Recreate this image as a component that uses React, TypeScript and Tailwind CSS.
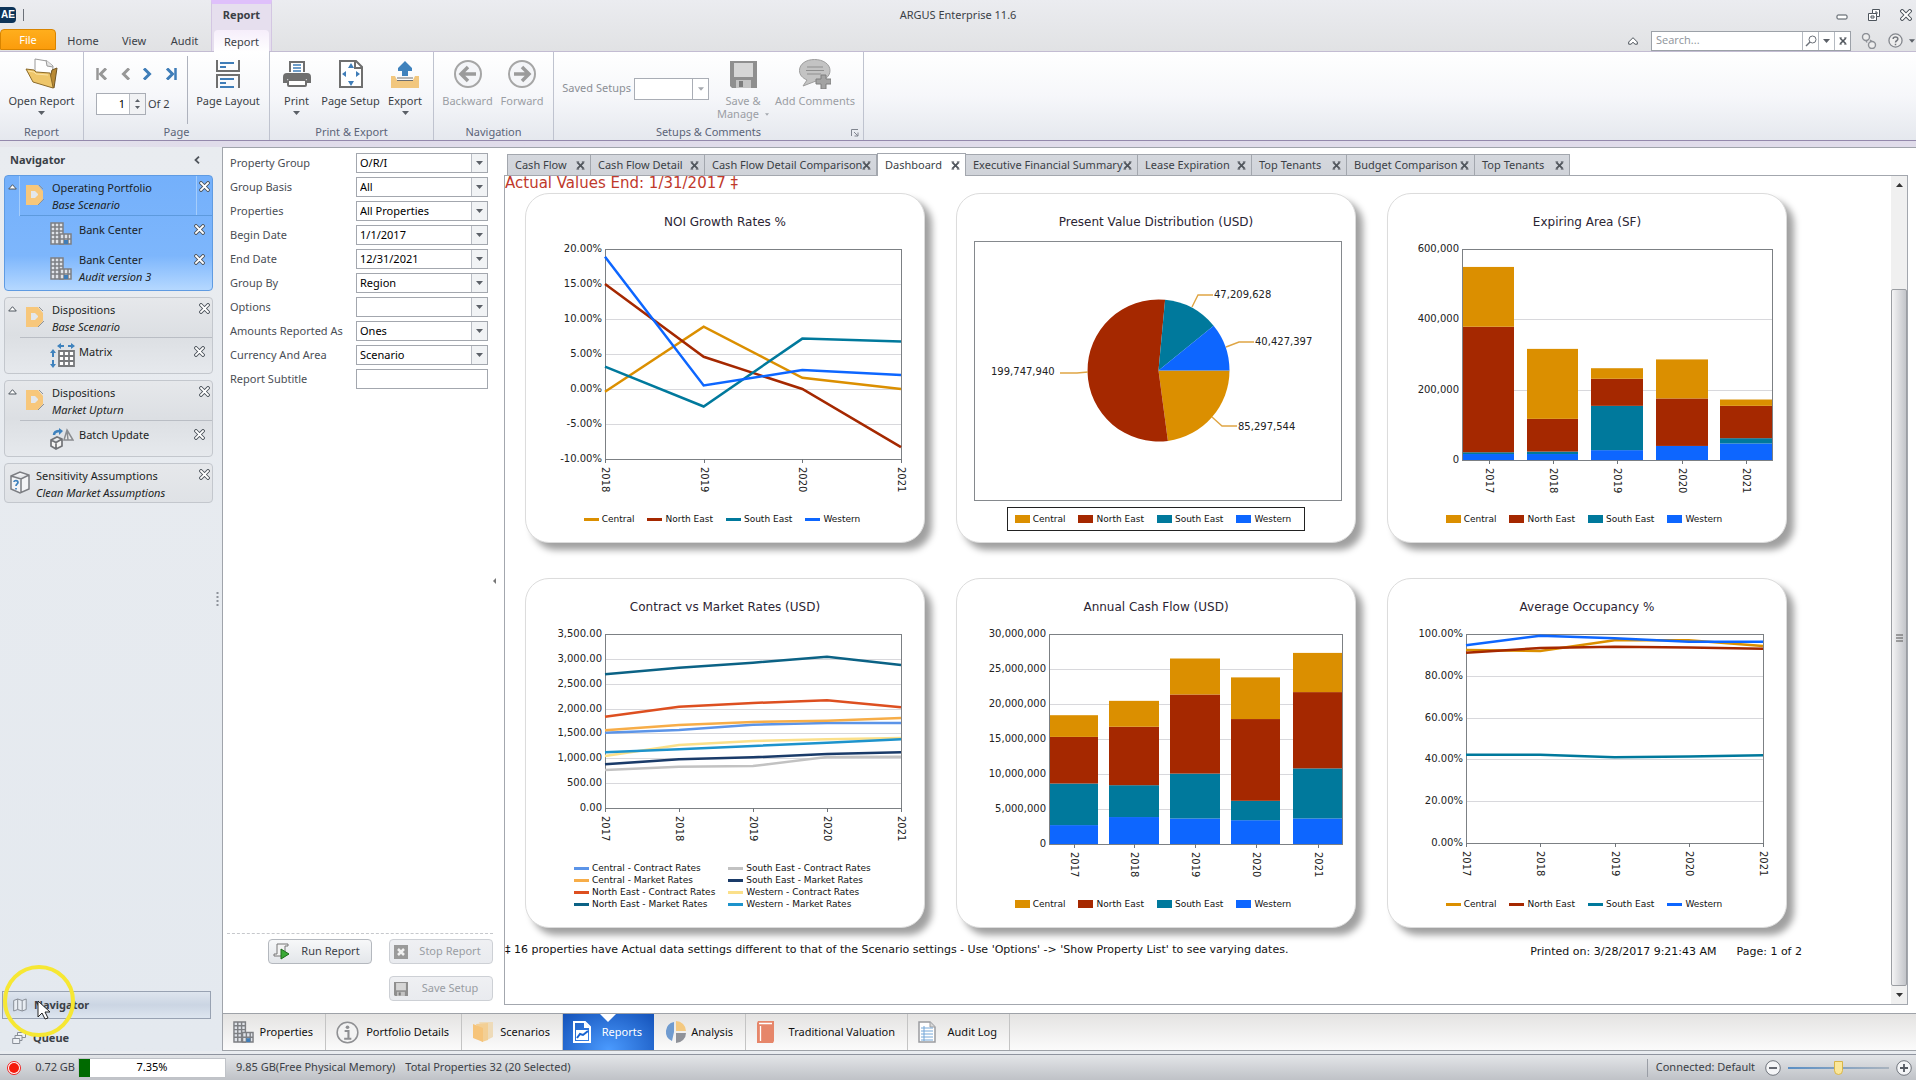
import React from "react";

const ORANGE = "#db8f00";
const RED = "#a52800";
const TEAL = "#00799c";
const BLUE = "#0d66ff";

/* ---------- small icons ---------- */

type IconProps = { className?: string };

const OutlineX = ({ className = "size-3" }: IconProps) => (
  <svg viewBox="0 0 12 12" className={className} aria-hidden>
    <path d="M2.2 2.2l7.6 7.6M9.8 2.2L2.2 9.8" stroke="#4d545c" strokeWidth="4" strokeLinecap="square" />
    <path d="M2.2 2.2l7.6 7.6M9.8 2.2L2.2 9.8" stroke="#fff" strokeWidth="2" strokeLinecap="square" />
  </svg>
);

const BoldX = ({ className = "size-[10px]" }: IconProps) => (
  <svg viewBox="0 0 10 10" className={className} aria-hidden>
    <path d="M1.5 1.5l7 7M8.5 1.5l-7 7" stroke="#50555c" strokeWidth="2" />
    <path d="M0.5 1h3M6.5 1h3M0.5 9h3M6.5 9h3" stroke="#50555c" strokeWidth="1" />
  </svg>
);

const DownArrow = ({ className = "w-[7px] h-1", color = "#5b6067" }: IconProps & { color?: string }) => (
  <svg viewBox="0 0 7 4" className={className} aria-hidden>
    <path d="M0 0h7L3.5 4z" fill={color} />
  </svg>
);

const FolderOpen = () => (
  <svg viewBox="0 0 34 32" className="w-[34px] h-8" aria-hidden>
    <path d="M10 1l12 2 6 5-1 13-17-2z" fill="#fff" stroke="#9a9a9a" />
    <path d="M21 2l1 6 6 1" fill="#e6e6e6" stroke="#9a9a9a" />
    <path d="M27 12l5-2-3 20-6-3z" fill="#b98a35" stroke="#6f5424" />
    <path d="M1 11l8 1 2 2 14 1 3 14v1L8 24z" fill="#eec66a" stroke="#8b6a2a" />
    <path d="M3 13l6 1 2 2 12 1" stroke="#fbe3a4" fill="none" />
  </svg>
);

const PageLayoutIcon = () => (
  <svg viewBox="0 0 24 28" className="w-6 h-7" aria-hidden>
    <path d="M1 0v11h22V0M1 28V15h22v13" fill="none" stroke="#6f6f6f" strokeWidth="2" />
    <path d="M4 3h14M4 7h6M4 19h14M4 23h6M4 27h14" stroke="#3f7db8" strokeWidth="2" />
  </svg>
);

const PrinterIcon = () => (
  <svg viewBox="0 0 28 26" className="w-7 h-[26px]" aria-hidden>
    <path d="M7 11V1h14v10" fill="#fff" stroke="#6f6f6f" strokeWidth="2" />
    <path d="M10 4h8M10 7h8M10 10h8" stroke="#3f7db8" strokeWidth="1.5" />
    <path d="M4 12h20a4 4 0 014 4v6h-4v-4H4v4H0v-6a4 4 0 014-4z" fill="#6f6f6f" />
    <rect x="5" y="19" width="18" height="6" rx="1" fill="#fff" stroke="#6f6f6f" strokeWidth="2" />
  </svg>
);

const PageSetupIcon = () => (
  <svg viewBox="0 0 24 28" className="w-6 h-7" aria-hidden>
    <path d="M1 1h16l6 6v20H1z" fill="#fff" stroke="#6f6f6f" strokeWidth="2" />
    <path d="M16 1v7h7" fill="none" stroke="#6f6f6f" strokeWidth="2" />
    <path d="M12 3l3 5H9zM12 26l3-5H9zM3 14l4-3v6zM21 14l-4-3v6z" fill="#3f7db8" />
  </svg>
);

const ExportIcon = () => (
  <svg viewBox="0 0 28 28" className="size-7" aria-hidden>
    <path d="M0 16h4l2 4h16l2-4h4v12H0z" fill="#f2c77e" />
    <path d="M14 1l7 7v3h-4v5h-6v-5H7V8z" fill="#3f82bd" />
    <path d="M6 18h16M6 20.5h16" stroke="#6f6f6f" />
  </svg>
);

const CircleArrow = ({ left }: { left?: boolean }) => (
  <svg viewBox="0 0 28 28" className="size-7" aria-hidden>
    <circle cx="14" cy="14" r="13" fill="#f4f5f8" stroke="#a6a6a6" strokeWidth="2" />
    <path
      d={left ? "M22 14H8M14 7l-7 7 7 7" : "M6 14h14M14 7l7 7-7 7"}
      fill="none"
      stroke="#9b9b9b"
      strokeWidth="3.5"
    />
  </svg>
);

const Floppy = ({ className = "size-[27px]" }: IconProps) => (
  <svg viewBox="0 0 27 27" className={className} aria-hidden>
    <path d="M0 0h27v27H2l-2-2z" fill="#8f8f8f" />
    <rect x="4" y="2" width="19" height="14" fill="#d6d6d6" />
    <rect x="6" y="19" width="15" height="8" fill="#c4c4c4" />
    <rect x="9" y="20" width="4" height="6" fill="#7d7d7d" />
  </svg>
);

const CommentAdd = () => (
  <svg viewBox="0 0 32 30" className="w-8 h-[30px]" aria-hidden>
    <path d="M15.500 0.500C24 0.500 31 5 31 11.500S25 22 17 22L4 27l4-6C3.500 19 .5 16 .5 11.500.5 5 7 .5 15.500.5z" fill="#c3c3c3" stroke="#9d9d9d" />
    <path d="M8 8h16M7 11.500h18M8 15h14" stroke="#8f8f8f" strokeWidth="1.200" />
    <path d="M22 16h5v4h5v5h-5v5h-5v-5h-5v-5h5z" fill="#a3a3a3" stroke="#7f7f7f" />
  </svg>
);

const NavArrow = ({ dir, end, on }: { dir: "l" | "r"; end?: boolean; on?: boolean }) => (
  <svg viewBox="0 0 12 12" className={dir === "l" ? "size-3 rotate-180" : "size-3"} aria-hidden>
    <path d="M2 0.500L7.500 6 2 11.500" fill="none" stroke={on ? "#3f7db8" : "#979797"} strokeWidth="3" />
    {end && <path d="M10.500 0v12" stroke={on ? "#3f7db8" : "#979797"} strokeWidth="2.500" />}
  </svg>
);

const ScenarioIcon = () => (
  <svg viewBox="0 0 20 22" className="w-5 h-[22px] shrink-0" aria-hidden>
    <path d="M1 1h12l5 6v8l-5 6H1z" fill="#f7c77b" />
    <path d="M6 7h4l3 3v1l-3 3H6z" fill="#e3e7ec" />
    <path d="M14 1l4 4M19 15l-6 6" fill="none" stroke="#8d9299" />
  </svg>
);

const BuildingIcon = ({ className = "w-[22px] h-[23px]" }: IconProps) => (
  <svg viewBox="0 0 22 23" className={className + " shrink-0"} aria-hidden>
    <path d="M1 1h12v21H1zM5 1v21M9 1v21M1 5h12M1 9h12M1 13h12M1 17h12" fill="#dfe3e8" stroke="#7d7f83" strokeWidth="1.500" />
    <path d="M10 12h11v10H10zM14 12v10M18 12v10M10 17h11" fill="#dfe3e8" stroke="#7d7f83" strokeWidth="1.500" />
    <rect x="14" y="18" width="4" height="4" fill="#3f7db8" />
  </svg>
);

const MatrixIcon = () => (
  <svg viewBox="0 0 26 25" className="w-[26px] h-[25px] shrink-0" aria-hidden>
    <path d="M9 8h15v15H9zM14 8v15M19 8v15M9 13h15M9 18h15" fill="#fff" stroke="#77797c" strokeWidth="1.800" />
    <path d="M7 3l4-3v6zM25 3l-4-3v6z" fill="#3f82bd" />
    <path d="M10 3h4M18 3h4" stroke="#3f82bd" strokeWidth="2" />
    <path d="M3 6l3 4H0zM3 25l3-4H0z" fill="#3f82bd" />
    <path d="M3 9v5M3 17v5" stroke="#3f82bd" strokeWidth="2" />
  </svg>
);

const BatchIcon = () => (
  <svg viewBox="0 0 24 22" className="w-6 h-[22px] shrink-0" aria-hidden>
    <path d="M1 12l6-3 5 2v7l-6 3-5-3zM1 12l5 2.500 6-3.500M6 14.500V21" fill="#f4f4f4" stroke="#717377" strokeWidth="1.700" />
    <path d="M4 7c0-3 3-4 6-4" fill="none" stroke="#3f82bd" strokeWidth="2.500" />
    <path d="M9 0l4 3-4 4z" fill="#3f82bd" />
    <path d="M17 2l6 10-9 0zM17 2l1 10" fill="#e9e9e9" stroke="#8a8c90" strokeWidth="1.500" />
  </svg>
);

const CubeQuestion = () => (
  <svg viewBox="0 0 20 23" className="w-5 h-[23px] shrink-0" aria-hidden>
    <path d="M1 5l9-4 9 3v14l-9 4-9-4zM1 5l10 3 8-4M11 8v14" fill="#f3f4f6" stroke="#7b7d82" strokeWidth="1.500" />
    <path d="M4 11c0-2 4-2 4 .5 0 1.500-2 1.500-2 3.500M6 17v1.500" fill="none" stroke="#3f82bd" strokeWidth="1.700" />
  </svg>
);

const InfoIcon = () => (
  <svg viewBox="0 0 24 24" className="size-[23px]" aria-hidden>
    <circle cx="12" cy="12" r="10.800" fill="#f3f3f3" stroke="#8f9093" strokeWidth="1.600" />
    <circle cx="12" cy="6.500" r="1.900" fill="#8f9093" />
    <path d="M9 10.500h4v8M8.500 18.500h7.500" fill="none" stroke="#8f9093" strokeWidth="2.200" />
  </svg>
);

const ScenariosIcon = () => (
  <svg viewBox="0 0 22 22" className="size-[22px]" aria-hidden>
    <path d="M7 1h14v15l-6 3z" fill="#eedbb9" />
    <path d="M4 3l12-1v17l-6 2z" fill="#f3cf94" />
    <path d="M1 3l10 4v14L1 17z" fill="#f6c47a" />
  </svg>
);

const ReportsIcon = () => (
  <svg viewBox="0 0 18 22" className="w-[18px] h-[22px]" aria-hidden>
    <path d="M1 1h11l5 5v15H1z" fill="none" stroke="#fff" strokeWidth="2" />
    <path d="M11 1v6h6z" fill="#fff" />
    <path d="M3 9h12v10H3z" fill="#fff" />
    <path d="M4 17l3-4 3 1 5-4" fill="none" stroke="#1762d0" strokeWidth="2" />
  </svg>
);

const AnalysisIcon = () => (
  <svg viewBox="0 0 22 22" className="size-[22px]" aria-hidden>
    <path d="M10 11V1A10 10 0 008 20z" fill="#6f9bd0" />
    <path d="M12 10V0a10 10 0 0110 10z" fill="#f4c980" />
    <path d="M12 12h10a10 10 0 01-10 10z" fill="#8f9299" />
  </svg>
);

const BookIcon = () => (
  <svg viewBox="0 0 18 22" className="w-[18px] h-[22px]" aria-hidden>
    <path d="M1 2l1-2h16v20l-1 2H1z" fill="#e6866a" />
    <path d="M3 2.500h13M4.500 5v15" stroke="#fff" strokeWidth="1.300" />
  </svg>
);

const LogIcon = () => (
  <svg viewBox="0 0 18 22" className="w-[18px] h-[22px]" aria-hidden>
    <path d="M1 1h11l5 5v15H1z" fill="#fff" stroke="#9a9ca0" strokeWidth="1.500" />
    <path d="M12 1v5h5" fill="#d8d8d8" stroke="#9a9ca0" />
    <path d="M3 7h12M3 10h12M3 13h12M3 16h12M3 19h12M6 5v15" stroke="#74a7d8" />
  </svg>
);

/* ---------- ribbon ---------- */

const RibbonButton = ({
  icon,
  label,
  arrow,
  disabled,
  width,
}: {
  icon: React.ReactNode;
  label: React.ReactNode;
  arrow?: boolean;
  disabled?: boolean;
  width: string;
}) => (
  <button
    disabled={disabled}
    className={
      "flex flex-col items-center text-center " + width + (disabled ? " text-[#9b9ea4]" : " text-[#3b3f46]")
    }
  >
    <span className="flex h-9 items-center">{icon}</span>
    <span className="whitespace-pre pt-0.5 leading-[13px]">{label}</span>
    {arrow && <DownArrow className="mt-1 h-1 w-[7px]" />}
  </button>
);

const RibbonGroup = ({
  title,
  width,
  children,
  launcher,
}: {
  title: string;
  width: string;
  children: React.ReactNode;
  launcher?: boolean;
}) => (
  <section className={"flex flex-col border-r border-[#bfc3cf] " + width}>
    <div className="flex flex-1 pt-1">{children}</div>
    <div className="relative text-center leading-4 text-[#5b6478]">
      {title}
      {launcher && (
        <button aria-label="Open dialog" className="absolute right-1 bottom-[3px]">
          <svg viewBox="0 0 8 8" className="size-2">
            <path d="M.5 7V.5H7M3 3l4 4M7 3.500V7H3.500" fill="none" stroke="#80858f" />
          </svg>
        </button>
      )}
    </div>
  </section>
);

const Header = () => (
  <header className="flex h-[52px] shrink-0 justify-between border-b border-[#c3bcd2] bg-linear-to-b from-[#ebecf0] to-[#e1e2e4]">
    <div className="flex flex-1">
      <div className="flex flex-col">
        <div className="flex h-[30px] items-center">
          <span className="flex h-4 w-4 items-center justify-center rounded-r bg-[#0c3358] font-['Liberation_Sans'] text-[10px] font-bold text-white">
            AE
          </span>
          <span className="ml-[7px] h-3 w-px bg-[#6b7078]" />
        </div>
        <nav className="flex h-[22px] text-[#3b3f46]">
          <button className="h-[21px] w-14 rounded-t-sm border border-[#d88400] bg-linear-to-b from-[#ffae1c] to-[#fb9c0b] text-white">
            File
          </button>
          <button className="w-[54px] pt-0.5">Home</button>
          <button className="w-12 pt-0.5">View</button>
          <button className="w-[53px] pt-0.5">Audit</button>
        </nav>
      </div>
      <div className="flex w-[61px] flex-col items-center border-x border-t-4 border-[#d3c6e2] border-t-[#dfc0fb] bg-[#e6dfee]">
        <span className="flex h-[26px] items-center pb-1 font-bold text-[#3b3f46]">Report</span>
        <button className="-mb-px h-[22px] w-[55px] rounded-t-sm bg-linear-to-b from-[#f6eefb] to-white pt-0.5 text-[#3b3f46]">
          Report
        </button>
      </div>
    </div>
    <h1 className="pt-[7px] text-[#3b3f46]">ARGUS Enterprise 11.6</h1>
    <div className="flex flex-1 flex-col items-end">
      <div className="flex h-[30px] items-center gap-5 pr-1">
        <button aria-label="Minimize">
          <svg viewBox="0 0 12 12" className="size-3">
            <rect x="1" y="6" width="10" height="4" rx="1" fill="#fff" stroke="#4d545c" />
          </svg>
        </button>
        <button aria-label="Restore">
          <svg viewBox="0 0 12 12" className="size-3">
            <path d="M4.500.5h7v7h-3v4h-8v-7h4z" fill="#fff" stroke="#4d545c" />
            <path d="M4.500 4.500h4v3M3 7h3v2H3zM7 3h2v2" fill="none" stroke="#4d545c" />
          </svg>
        </button>
        <button aria-label="Close">
          <OutlineX />
        </button>
      </div>
      <div className="flex h-[21px] items-center">
        <button aria-label="Collapse ribbon" className="mr-[13px]">
          <svg viewBox="0 0 10 8" className="h-2 w-[10px]">
            <path d="M5 .7L9.300 5v2.200H7L5 5.300 3 7.200H.7V5z" fill="#fff" stroke="#4d545c" />
          </svg>
        </button>
        <div className="flex h-5 w-[200px] border border-[#9ca1a8] bg-white">
          <input
            aria-label="Search"
            placeholder="Search..."
            className="min-w-0 flex-1 px-1 font-['Open_Sans'] outline-none placeholder:text-[#8e939a]"
          />
          <button aria-label="Find" className="flex w-4 items-center justify-center border-l border-[#b5bac1]">
            <svg viewBox="0 0 12 12" className="size-3">
              <circle cx="7.500" cy="4.500" r="3.500" fill="none" stroke="#6b7078" />
              <path d="M5 7l-4 4" stroke="#6b7078" strokeWidth="1.500" />
            </svg>
          </button>
          <button aria-label="Search options" className="flex w-4 items-center justify-center border-l border-[#b5bac1]">
            <DownArrow />
          </button>
          <button aria-label="Clear search" className="flex w-4 items-center justify-center border-l border-[#b5bac1]">
            <BoldX className="size-2" />
          </button>
        </div>
        <button aria-label="Links" className="ml-[10px]">
          <svg viewBox="0 0 16 16" className="size-4">
            <circle cx="5" cy="4" r="3.500" fill="#eee" stroke="#8d9096" strokeWidth="1.400" />
            <circle cx="11" cy="12" r="3.500" fill="#eee" stroke="#8d9096" strokeWidth="1.400" />
            <path d="M5 7.500l1 2M9 7l2 1.500" stroke="#8d9096" strokeWidth="1.400" />
          </svg>
        </button>
        <button aria-label="Help" className="ml-[11px] flex items-center gap-[6px] pr-px">
          <svg viewBox="0 0 16 16" className="size-[15px]">
            <circle cx="8" cy="8" r="7" fill="#eee" stroke="#85888e" strokeWidth="1.400" />
            <path d="M5.500 6.500c0-3 5-3 5 0 0 2-2.500 1.500-2.500 3.500M8 11.500V13" fill="none" stroke="#75787e" strokeWidth="1.600" />
          </svg>
          <DownArrow className="h-1 w-[6px]" />
        </button>
      </div>
    </div>
  </header>
);

const Ribbon = () => (
  <div className="flex h-[89px] shrink-0 border-b border-[#9489ac] bg-linear-to-b from-white via-[#f6f7fa] to-[#e5e8ee]">
    <RibbonGroup title="Report" width="w-[84px]">
      <RibbonButton width="w-full" icon={<FolderOpen />} label="Open Report" arrow />
    </RibbonGroup>
    <RibbonGroup title="Page" width="w-[186px]">
      <div className="flex w-[104px] flex-col border-r border-[#aeb2bd] pl-3">
        <div className="flex h-9 items-center gap-[11px]">
          <button aria-label="First page"><NavArrow dir="l" end /></button>
          <button aria-label="Previous page"><NavArrow dir="l" /></button>
          <button aria-label="Next page"><NavArrow dir="r" on /></button>
          <button aria-label="Last page"><NavArrow dir="r" end on /></button>
        </div>
        <label className="flex items-center gap-0.5 pt-px text-[#3b3f46]">
          <span className="flex h-[22px] w-[50px] border border-[#a9adb5] bg-white">
            <input aria-label="Page number" defaultValue="1" className="w-8 pr-1 text-right text-black outline-none" />
            <span className="flex flex-1 flex-col items-center justify-center gap-1 border-l border-[#b9bdc4] bg-[#f1f2f4]">
              <DownArrow className="h-[3px] w-[5px] rotate-180" />
              <DownArrow className="h-[3px] w-[5px]" />
            </span>
          </span>
          Of 2
        </label>
      </div>
      <RibbonButton width="w-20" icon={<PageLayoutIcon />} label="Page Layout" />
    </RibbonGroup>
    <RibbonGroup title="Print & Export" width="w-[164px]">
      <RibbonButton width="w-[53px]" icon={<PrinterIcon />} label="Print" arrow />
      <RibbonButton width="w-[55px]" icon={<PageSetupIcon />} label="Page Setup" />
      <RibbonButton width="w-[54px]" icon={<ExportIcon />} label="Export" arrow />
    </RibbonGroup>
    <RibbonGroup title="Navigation" width="w-[120px]">
      <RibbonButton width="w-[67px]" disabled icon={<CircleArrow left />} label="Backward" />
      <RibbonButton width="w-[42px]" disabled icon={<CircleArrow />} label="Forward" />
    </RibbonGroup>
    <RibbonGroup title="Setups & Comments" width="w-[310px]" launcher>
      <label className="flex h-[65px] w-[155px] items-center justify-end gap-[3px] whitespace-nowrap text-[#8b8f96]">
        Saved Setups
        <span className="relative flex">
          <select disabled className="h-[22px] w-[75px] appearance-none border border-[#a9adb5] bg-white" />
          <span className="pointer-events-none absolute inset-y-0 right-0 flex w-[17px] items-center justify-center border-l border-[#a9adb5]">
            <DownArrow className="h-1 w-[6px]" color="#a4a8ae" />
          </span>
        </span>
      </label>
      <RibbonButton
        width="w-[68px]"
        disabled
        icon={<Floppy />}
        label={
          <>
            {"Save &\nManage"}
            <DownArrow className="mb-0.5 ml-1.5 inline h-[3px] w-1" color="#a4a8ae" />
          </>
        }
      />
      <RibbonButton width="w-[76px]" disabled icon={<CommentAdd />} label="Add Comments" />
    </RibbonGroup>
  </div>
);

/* ---------- navigator ---------- */

type NavEntry = { title: string; note?: string; icon: React.ReactNode };

const NavCard = ({
  title,
  note,
  items,
  active,
}: {
  title: string;
  note: string;
  items: NavEntry[];
  active?: boolean;
}) => (
  <section
    className={
      "rounded-sm border pb-[5px] " +
      (active
        ? "border-[#5f9be2] bg-linear-to-b from-[#74b0fb] via-[#7db6fc] via-70% to-[#b5d8ff]"
        : "border-[#c3c7cd] bg-linear-to-b from-[#e6e8eb] via-[#dcdfe3] to-[#e6e9ed]")
    }
  >
    <div className="flex h-10">
      <button
        aria-label={"Collapse " + title}
        className={"flex w-[15px] justify-center pt-2 " + (active ? "border-r border-[#a5cdfb]" : "")}
      >
        <svg viewBox="0 0 9 6" className="h-[6px] w-[9px]">
          <path d="M4.500.7L8.300 5H.7z" fill="#fff" stroke="#4d545c" />
        </svg>
      </button>
      <div className={"flex flex-1 border-b " + (active ? "border-[#5d9ade]" : "border-[#b9bdc4]")}>
        <span className="pt-2 pl-[5px]">
          <ScenarioIcon />
        </span>
        <div className="flex-1 pt-[3px] pl-[7px] leading-[17px]">
          <div>{title}</div>
          <div className="italic">{note}</div>
        </div>
        <button
          aria-label={"Close " + title}
          className={"flex w-4 justify-center pt-[5px] " + (active ? "border-l border-[#a5cdfb]" : "")}
        >
          <OutlineX className="size-[11px]" />
        </button>
      </div>
    </div>
    {items.map((it) => (
      <div key={it.title + it.note} className="mt-[5px] flex pl-[45px]">
        <span className="flex w-[29px] items-center">{it.icon}</span>
        <div className="flex-1 leading-[17px]">
          <div>{it.title}</div>
          {it.note ? <div className="italic">{it.note}</div> : <div className="h-2" />}
        </div>
        <button aria-label={"Close " + it.title} className="mr-[7px] self-start pt-[3px]">
          <OutlineX className="size-[11px]" />
        </button>
      </div>
    ))}
  </section>
);

const Navigator = () => (
  <aside className="flex w-[222px] shrink-0 bg-linear-to-b from-[#e9ecf0] to-[#e4e9ef] text-[#1c1f24]">
    <div className="flex flex-1 flex-col">
      <div className="flex h-7 items-center justify-between pr-[13px] pb-0.5 pl-[10px]">
        <h2 className="font-bold text-[#3b3f46]">Navigator</h2>
        <button aria-label="Collapse navigator">
          <svg viewBox="0 0 6 8" className="h-2 w-[6px]">
            <path d="M5 .7L1.500 4 5 7.300" fill="none" stroke="#50555c" strokeWidth="1.800" />
          </svg>
        </button>
      </div>
      <div className="flex flex-1 flex-col gap-[6px] pl-1">
        <NavCard
          active
          title="Operating Portfolio"
          note="Base Scenario"
          items={[
            { title: "Bank Center", icon: <BuildingIcon /> },
            { title: "Bank Center", note: "Audit version 3", icon: <BuildingIcon /> },
          ]}
        />
        <NavCard title="Dispositions" note="Base Scenario" items={[{ title: "Matrix", icon: <MatrixIcon /> }]} />
        <NavCard title="Dispositions" note="Market Upturn" items={[{ title: "Batch Update", icon: <BatchIcon /> }]} />
        <section className="flex h-10 rounded-sm border border-[#c3c7cd] bg-linear-to-b from-[#e6e8eb] to-[#dfe2e6] pt-[3px] pl-[5px]">
          <span className="pt-1">
            <CubeQuestion />
          </span>
          <div className="flex-1 pl-[6px] leading-[17px]">
            <div>Sensitivity Assumptions</div>
            <div className="italic">Clean Market Assumptions</div>
          </div>
          <button aria-label="Close Sensitivity Assumptions" className="mr-0.5 self-start pt-0.5">
            <OutlineX className="size-[11px]" />
          </button>
        </section>
      </div>
      <div className="relative ml-0.5 flex flex-col pr-0.5 font-bold text-[#3b3f46]">
        <button className="flex h-7 items-center gap-[7px] border border-[#98a2b2] bg-linear-to-b from-[#dee5ee] via-[#cbd5e3] to-[#dde5ef] pl-[10px]">
          <svg viewBox="0 0 14 14" className="size-[14px]">
            <path d="M.7 2.500l4-1.500 4.500 1.500 4-1.500v10.500l-4 1.500-4.500-1.500-4 1.500zM4.700 1v10.500M9.200 2.500V13" fill="#e8edf3" stroke="#888e97" />
          </svg>
          Navigator
        </button>
        <button className="flex h-8 items-center gap-[7px] pt-[6px] pl-[10px]">
          <svg viewBox="0 0 14 14" className="size-[14px]">
            <path d="M5.500 1.500h8v5h-8z" fill="#eef1f5" stroke="#888e97" />
            <path d="M3 4.500h7v5H3z" fill="#eef1f5" stroke="#888e97" />
            <path d="M.7 7.500h7v5h-7z" fill="#eef1f5" stroke="#888e97" />
          </svg>
          Queue
        </button>
        <svg viewBox="0 0 76 76" className="pointer-events-none absolute -top-7 left-[-1px] size-[76px]" aria-hidden>
          <circle cx="38" cy="38" r="34" fill="none" stroke="#f6e733" strokeWidth="4" />
          <path d="M37 38v16l4-4 3 6 3-1-3-6h5z" fill="#fff" stroke="#222" />
        </svg>
      </div>
    </div>
    <div className="flex w-[9px] items-center justify-center">
      <svg viewBox="0 0 3 14" className="h-[14px] w-[3px]" aria-hidden>
        <path d="M1.500 0v14" stroke="#8d929a" strokeWidth="2" strokeDasharray="2 2" />
      </svg>
    </div>
  </aside>
);

/* ---------- report settings ---------- */

const FIELDS = [
  { label: "Property Group", value: "O/R/I" },
  { label: "Group Basis", value: "All" },
  { label: "Properties", value: "All Properties" },
  { label: "Begin Date", value: "1/1/2017" },
  { label: "End Date", value: "12/31/2021" },
  { label: "Group By", value: "Region" },
  { label: "Options", value: "" },
  { label: "Amounts Reported As", value: "Ones" },
  { label: "Currency And Area", value: "Scenario" },
];

const actionClass =
  "flex h-[25px] w-[104px] items-center rounded-sm border border-[#b4b8be] bg-linear-to-b from-[#f7f8f9] to-[#e3e6ea] pl-1 text-[#3b3f46] disabled:border-[#cdd0d5] disabled:from-[#eff0f3] disabled:to-[#e9ebef] disabled:text-[#999da3]";

const Settings = () => (
  <form className="flex w-[270px] shrink-0 flex-col pt-[5px] pl-1 text-[#4a4e55]">
    <div className="flex flex-col gap-1 pl-[3px]">
      {FIELDS.map((f) => (
        <label key={f.label} className="flex h-5 items-center">
          <span className="w-[126px]">{f.label}</span>
          <span className="relative flex">
            <select className="h-5 w-[132px] appearance-none border border-[#a3a7ae] bg-white pl-[3px] text-black">
              <option>{f.value}</option>
            </select>
            <span className="pointer-events-none absolute inset-y-px right-px flex w-4 items-center justify-center border-l border-[#b9bdc4] bg-[#f1f3f5]">
              <DownArrow className="h-1 w-[7px]" />
            </span>
          </span>
        </label>
      ))}
      <label className="flex h-5 items-center">
        <span className="w-[126px]">Report Subtitle</span>
        <input className="h-5 w-[132px] border border-[#a3a7ae] bg-white px-1" />
      </label>
    </div>
    <div className="mt-auto flex flex-col items-end gap-3 border-t border-dashed border-[#c6c8cc] pt-[5px] pb-3">
      <div className="flex gap-[17px]">
        <button type="button" className={actionClass}>
          <svg viewBox="0 0 17 17" className="size-[17px]">
            <path d="M4 1h11v2h-3v10H1v-2h3z" fill="#f3f3f3" stroke="#777" />
            <path d="M8 6l8 5-8 5z" fill="#39a935" stroke="#1d6b1b" />
          </svg>
          <span className="flex-1">Run Report</span>
        </button>
        <button type="button" disabled className={actionClass}>
          <svg viewBox="0 0 14 14" className="size-[14px]">
            <path d="M0 0h14v14H0z" fill="#9a9a9a" />
            <path d="M4 4l6 6M10 4l-6 6" stroke="#f1f1f1" strokeWidth="2.500" />
          </svg>
          <span className="flex-1">Stop Report</span>
        </button>
      </div>
      <button type="button" disabled className={actionClass}>
        <Floppy className="size-[14px]" />
        <span className="flex-1">Save Setup</span>
      </button>
    </div>
  </form>
);

/* ---------- charts ---------- */

type Axis = { left: number; right: number; top: number; bottom: number };

const XLabel = ({ x, y, text }: { x: number; y: number; text: string }) => (
  <>
    <path d={`M${x} ${y}v4`} stroke="#70757a" />
    <text transform={`translate(${x - 4} ${y + 8}) rotate(90)`} fontSize="10" fill="#222">
      {text}
    </text>
  </>
);

const YAxis = ({ axis, labels }: { axis: Axis; labels: string[] }) => (
  <>
    {labels.map((l, i) => {
      const y = Math.round(axis.top + ((axis.bottom - axis.top) * i) / (labels.length - 1)) + 0.5;
      return (
        <g key={l}>
          <path d={`M${axis.left} ${y}H${axis.right}`} stroke="#d8d8dc" />
          <text x={axis.left - 3} y={y + 2.5} textAnchor="end" fontSize="10" fill="#222">
            {l}
          </text>
        </g>
      );
    })}
  </>
);

const Frame = ({ axis }: { axis: Axis }) => (
  <rect
    x={axis.left + 0.5}
    y={axis.top + 0.5}
    width={axis.right - axis.left}
    height={axis.bottom - axis.top}
    fill="none"
    stroke="#7c8084"
  />
);

const Plot = ({ label, height = 267, children }: { label: string; height?: number; children: React.ReactNode }) => (
  <svg
    role="img"
    aria-label={label}
    width="398"
    height={height}
    viewBox={`1 45 398 ${height}`}
    className="font-['DejaVu_Sans']"
  >
    {children}
  </svg>
);

const LinePlot = ({
  label,
  axis,
  min,
  max,
  yLabels,
  years,
  series,
  height,
}: {
  label: string;
  axis: Axis;
  min: number;
  max: number;
  yLabels: string[];
  years: number[];
  series: { color: string; values: number[] }[];
  height?: number;
}) => {
  const px = (i: number) => axis.left + ((axis.right - axis.left) * i) / (years.length - 1);
  const py = (v: number) => axis.bottom - ((v - min) / (max - min)) * (axis.bottom - axis.top);
  return (
    <Plot label={label} height={height}>
      <YAxis axis={axis} labels={yLabels} />
      <Frame axis={axis} />
      {series.map((s) => (
        <polyline
          key={s.color}
          points={s.values.map((v, i) => `${px(i)},${py(v)}`).join(" ")}
          fill="none"
          stroke={s.color}
          strokeWidth="2.5"
        />
      ))}
      {years.map((y, i) => (
        <XLabel key={y} x={Math.round(px(i)) + 0.5} y={axis.bottom} text={String(y)} />
      ))}
    </Plot>
  );
};

const BAR_COLORS = [BLUE, TEAL, RED, ORANGE];

const BarPlot = ({
  label,
  axis,
  max,
  yLabels,
  bars,
}: {
  label: string;
  axis: Axis;
  max: number;
  yLabels: string[];
  bars: { year: number; from: number; to: number; tops: number[] }[];
}) => {
  const py = (v: number) => axis.bottom - (v / max) * (axis.bottom - axis.top);
  return (
    <Plot label={label}>
      <YAxis axis={axis} labels={yLabels} />
      {bars.map((b) =>
        b.tops.map((t, i) => {
          const y1 = py(t);
          const y0 = py(i ? b.tops[i - 1] : 0);
          return <rect key={b.year + "-" + i} x={b.from} y={y1} width={b.to - b.from} height={y0 - y1} fill={BAR_COLORS[i]} />;
        })
      )}
      <Frame axis={axis} />
      {bars.map((b) => (
        <XLabel key={b.year} x={Math.round((b.from + b.to) / 2) + 0.5} y={axis.bottom} text={String(b.year)} />
      ))}
    </Plot>
  );
};

const PIE = [
  { value: 85297544, color: ORANGE, line: "M256 224l10 9h15", x: 282, y: 237, text: "85,297,544" },
  { value: 199747940, color: RED, line: "M104 180h17l11-1", x: 35, y: 182, text: "199,747,940" },
  { value: 47209628, color: TEAL, line: "M236 114l6-12h15", x: 258, y: 105, text: "47,209,628" },
  { value: 40427397, color: BLUE, line: "M270 154l13-5h15", x: 299, y: 152, text: "40,427,397" },
];

const PiePlot = () => {
  const total = PIE.reduce((s, p) => s + p.value, 0);
  let angle = 0;
  return (
    <Plot label="Present value by region">
      <rect x="18.500" y="48.500" width="367" height="259" fill="none" stroke="#85898d" />
      {PIE.map((p) => {
        const a0 = angle;
        angle += (p.value / total) * Math.PI * 2;
        const pt = (a: number) => `${202.5 + 71 * Math.cos(a)} ${177.5 + 71 * Math.sin(a)}`;
        const large = angle - a0 > Math.PI ? 1 : 0;
        return (
          <g key={p.text}>
            <path d={`M202.5 177.5L${pt(a0)}A71 71 0 ${large} 1 ${pt(angle)}z`} fill={p.color} />
            <path d={p.line} fill="none" stroke="#dfa544" strokeWidth="1.400" />
            <text x={p.x} y={p.y} fontSize="10" fill="#222">
              {p.text}
            </text>
          </g>
        );
      })}
    </Plot>
  );
};

const REGIONS = [
  { name: "Central", bg: "bg-[#db8f00]" },
  { name: "North East", bg: "bg-[#a52800]" },
  { name: "South East", bg: "bg-[#00799c]" },
  { name: "Western", bg: "bg-[#0d66ff]" },
];

const Legend = ({ line, boxed }: { line?: boolean; boxed?: boolean }) => (
  <ul
    className={
      "mx-auto mt-0.5 flex h-6 w-fit items-center gap-[13px] border pr-[13px] pl-[7px] text-[9px] leading-3 " +
      (boxed ? "border-[#222]" : "border-transparent")
    }
  >
    {REGIONS.map((r) => (
      <li key={r.name} className="flex items-center gap-[3px]">
        <span className={(line ? "h-[3px]" : "h-2") + " w-[15px] " + r.bg} />
        {r.name}
      </li>
    ))}
  </ul>
);

const RATES = [
  { name: "Central - Contract Rates", color: "#5b94e8", bg: "bg-[#5b94e8]", values: [1515, 1569, 1676, 1710, 1710] },
  { name: "Central - Market Rates", color: "#f7ad48", bg: "bg-[#f7ad48]", values: [1562, 1670, 1730, 1757, 1810] },
  { name: "North East - Contract Rates", color: "#dd4f20", bg: "bg-[#dd4f20]", values: [1837, 2038, 2112, 2166, 2025] },
  { name: "North East - Market Rates", color: "#0b6285", bg: "bg-[#0b6285]", values: [2689, 2823, 2923, 3044, 2876] },
  { name: "South East - Contract Rates", color: "#c2c2c2", bg: "bg-[#c2c2c2]", values: [764, 831, 845, 1026, 1033] },
  { name: "South East - Market Rates", color: "#1a3b69", bg: "bg-[#1a3b69]", values: [878, 979, 1019, 1086, 1120] },
  { name: "Western - Contract Rates", color: "#fbe08a", bg: "bg-[#fbe08a]", values: [1046, 1267, 1348, 1381, 1408] },
  { name: "Western - Market Rates", color: "#1d93cc", bg: "bg-[#1d93cc]", values: [1120, 1180, 1247, 1314, 1381] },
];

const ChartCard = ({ title, children }: { title: string; children: React.ReactNode }) => (
  <figure className="h-[350px] rounded-[24px] border border-[#dcdcdc] bg-white shadow-[7px_7px_7px_#a0a0a0]">
    <figcaption className="flex h-11 items-end justify-center pb-2 text-xs leading-4 text-[#2b2433]">{title}</figcaption>
    {children}
  </figure>
);

const LINE_AXIS = { left: 80, right: 376, top: 56, bottom: 266 };

const Report = () => (
  <article className="w-[1297px] shrink-0 font-['DejaVu_Sans'] text-[#111]">
    <p className="h-[17px] text-[15px] leading-[15px] text-[#c0392b]">Actual Values End: 1/31/2017 ‡</p>
    <div className="grid grid-cols-[repeat(3,400px)] gap-x-[31px] gap-y-[35px] pl-5">
      <ChartCard title="NOI Growth Rates %">
        <LinePlot
          label="NOI growth rates by region"
          axis={LINE_AXIS}
          min={-10}
          max={20}
          yLabels={["20.00%", "15.00%", "10.00%", "5.00%", "0.00%", "-5.00%", "-10.00%"]}
          years={[2018, 2019, 2020, 2021]}
          series={[
            { color: ORANGE, values: [-0.4, 8.9, 1.6, 0] },
            { color: RED, values: [15, 4.6, 0, -8.3] },
            { color: TEAL, values: [3.2, -2.5, 7.2, 6.8] },
            { color: BLUE, values: [18.9, 0.5, 2.7, 2] },
          ]}
        />
        <Legend line />
      </ChartCard>
      <ChartCard title="Present Value Distribution (USD)">
        <PiePlot />
        <Legend boxed />
      </ChartCard>
      <ChartCard title="Expiring Area (SF)">
        <BarPlot
          label="Expiring area by region"
          axis={{ left: 75, right: 385, top: 56, bottom: 267 }}
          max={600}
          yLabels={["600,000", "400,000", "200,000", "0"]}
          bars={[
            { year: 2017, from: 76, to: 127, tops: [17, 22, 379, 549] },
            { year: 2018, from: 140, to: 191, tops: [17, 24, 117, 316] },
            { year: 2019, from: 204, to: 256, tops: [28, 154, 231, 261] },
            { year: 2020, from: 269, to: 321, tops: [40, 40, 175, 286] },
            { year: 2021, from: 333, to: 385, tops: [47, 62, 154, 172] },
          ]}
        />
        <Legend />
      </ChartCard>
      <ChartCard title="Contract vs Market Rates (USD)">
        <LinePlot
          label="Contract and market rates by region"
          height={239}
          axis={{ left: 80, right: 376, top: 56, bottom: 230 }}
          min={0}
          max={3500}
          yLabels={["3,500.00", "3,000.00", "2,500.00", "2,000.00", "1,500.00", "1,000.00", "500.00", "0.00"]}
          years={[2017, 2018, 2019, 2020, 2021]}
          series={[4, 6, 0, 1, 2, 3, 5, 7].map((i) => RATES[i])}
        />
        <ul className="grid w-fit grid-flow-col grid-rows-4 gap-x-[13px] pl-12 text-[9px] leading-3">
          {RATES.map((r) => (
            <li key={r.name} className="flex items-center gap-[3px]">
              <span className={"h-[3px] w-[15px] " + r.bg} />
              {r.name}
            </li>
          ))}
        </ul>
      </ChartCard>
      <ChartCard title="Annual Cash Flow (USD)">
        <BarPlot
          label="Annual cash flow by region"
          axis={{ left: 93, right: 386, top: 56, bottom: 266 }}
          max={30}
          yLabels={["30,000,000", "25,000,000", "20,000,000", "15,000,000", "10,000,000", "5,000,000", "0"]}
          bars={[
            { year: 2017, from: 94, to: 142, tops: [2.7, 8.64, 15.3, 18.4] },
            { year: 2018, from: 153, to: 203, tops: [3.85, 8.4, 16.75, 20.45] },
            { year: 2019, from: 214, to: 264, tops: [3.65, 10.06, 21.36, 26.5] },
            { year: 2020, from: 275, to: 324, tops: [3.4, 6.17, 17.85, 23.8] },
            { year: 2021, from: 337, to: 386, tops: [3.65, 10.8, 21.7, 27.3] },
          ]}
        />
        <Legend />
      </ChartCard>
      <ChartCard title="Average Occupancy %">
        <LinePlot
          label="Average occupancy by region"
          axis={{ left: 79, right: 376, top: 56, bottom: 265 }}
          min={0}
          max={100}
          yLabels={["100.00%", "80.00%", "60.00%", "40.00%", "20.00%", "0.00%"]}
          years={[2017, 2018, 2019, 2020, 2021]}
          series={[
            { color: ORANGE, values: [92.4, 91.9, 97, 97, 94.3] },
            { color: RED, values: [91, 93.3, 93.9, 93.6, 93] },
            { color: TEAL, values: [42.2, 42.2, 41, 41.4, 42] },
            { color: BLUE, values: [94.6, 99.2, 98, 96.3, 96.3] },
          ]}
        />
        <Legend line />
      </ChartCard>
    </div>
    <footer className="flex justify-between pt-[14px]">
      <p>‡ 16 properties have Actual data settings different to that of the Scenario settings - Use 'Options' -&gt; 'Show Property List' to see varying dates.</p>
      <p className="flex gap-5 pt-0.5">
        <span>Printed on: 3/28/2017 9:21:43 AM</span>
        <span>Page: 1 of 2</span>
      </p>
    </footer>
  </article>
);

const TABS = [
  { name: "Cash Flow", width: "w-[84px]" },
  { name: "Cash Flow Detail", width: "w-[114px]" },
  { name: "Cash Flow Detail Comparison", width: "w-[172px]" },
  { name: "Dashboard", width: "w-[89px]", active: true },
  { name: "Executive Financial Summary", width: "w-[172px]" },
  { name: "Lease Expiration", width: "w-[114px]" },
  { name: "Top Tenants", width: "w-[95px]" },
  { name: "Budget Comparison", width: "w-[128px]" },
  { name: "Top Tenants", width: "w-[95px]" },
];

const Viewer = () => (
  <section className="flex min-w-0 flex-1 flex-col pt-1 pr-2 pb-2">
    <div className="flex h-[23px] items-end pl-[3px]" role="tablist">
      {TABS.map((t, i) => (
        <div
          key={i}
          className={
            "flex items-center justify-between border-[#a3a7ae] pr-[5px] pl-[7px] whitespace-nowrap text-[#3b3f46] " +
            t.width +
            (t.active
              ? " z-10 -mb-px h-[23px] border-x border-t bg-white"
              : " h-[21px] border-t border-r bg-linear-to-b from-[#d5d8de] to-[#d0d3d9] first:border-l")
          }
        >
          <button role="tab" aria-selected={!!t.active}>
            {t.name}
          </button>
          <button aria-label={"Close " + t.name}>
            <BoldX className="size-[9px]" />
          </button>
        </div>
      ))}
    </div>
    <div className="flex min-h-0 flex-1 overflow-hidden border border-[#a3a7ae]">
      <div className="min-w-0 flex-1 overflow-hidden">
        <Report />
      </div>
      <div className="flex w-4 flex-col items-center bg-[#f0f0f0]">
        <span className="flex h-[17px] items-center">
          <DownArrow className="h-1 w-[7px] rotate-180" color="#333" />
        </span>
        <div className="flex flex-1 flex-col self-stretch pt-24">
          <span className="flex flex-1 items-center justify-center rounded-xs border border-[#9b9ea3] bg-linear-to-r from-[#f4f4f5] to-[#c3c5ca]">
            <svg viewBox="0 0 7 8" className="h-2 w-[7px]" aria-hidden>
              <path d="M0 1h7M0 4h7M0 7h7" stroke="#555" />
            </svg>
          </span>
        </div>
        <span className="flex h-[18px] items-center">
          <DownArrow className="h-1 w-[7px]" color="#333" />
        </span>
      </div>
    </div>
  </section>
);

/* ---------- bottom ---------- */

const BOTTOM = [
  { name: "Properties", icon: <BuildingIcon className="h-[22px] w-[21px]" />, width: "w-[103px]" },
  { name: "Portfolio Details", icon: <InfoIcon />, width: "w-[136px]" },
  { name: "Scenarios", icon: <ScenariosIcon />, width: "w-[101px]" },
  { name: "Reports", icon: <ReportsIcon />, width: "w-[91px]", active: true },
  { name: "Analysis", icon: <AnalysisIcon />, width: "w-[92px]" },
  { name: "Traditional Valuation", icon: <BookIcon />, width: "w-[162px]" },
  { name: "Audit Log", icon: <LogIcon />, width: "w-[102px]" },
];

const BottomTabs = () => (
  <nav className="flex h-[38px] shrink-0 border-y border-[#9ea2a8] bg-linear-to-b from-[#e4e3e2] to-[#fbfbfb] text-[#111]">
    {BOTTOM.map((b) => (
      <button
        key={b.name}
        className={
          "relative flex items-center justify-between pr-3 pl-[10px] whitespace-nowrap " +
          b.width +
          (b.active
            ? " bg-[radial-gradient(ellipse_at_bottom,#4b9bff,#1452b9)] text-white"
            : " border-r border-[#c4c4c4]")
        }
      >
        {b.icon}
        {b.name}
        {b.active && (
          <svg viewBox="0 0 16 8" className="absolute top-0 left-[37px] h-2 w-4" aria-hidden>
            <path d="M0 0h16L8 8z" fill="#fff" />
          </svg>
        )}
      </button>
    ))}
  </nav>
);

const RoundButton = ({ plus }: { plus?: boolean }) => (
  <button aria-label={plus ? "Zoom in" : "Zoom out"}>
    <svg viewBox="0 0 16 16" className="size-4">
      <circle cx="8" cy="8" r="7.300" fill="#f4f5f7" stroke="#70757d" />
      <path d={plus ? "M4 8h8M8 4v8" : "M4 8h8"} stroke="#555a62" strokeWidth="1.800" />
    </svg>
  </button>
);

const StatusBar = () => (
  <footer className="flex h-[26px] shrink-0 items-center border-t border-[#8f949f] bg-linear-to-b from-[#e3e5e8] to-[#bfc2c7] text-[#3b3f46]">
    <svg viewBox="0 0 14 14" className="ml-[7px] size-[14px]" aria-hidden>
      <circle cx="7" cy="7" r="6.500" fill="#fff" stroke="#e22" />
      <circle cx="7" cy="7" r="5" fill="#f51b0c" />
    </svg>
    <span className="w-[57px] pr-[3px] text-right">0.72 GB</span>
    <div className="flex h-5 w-[148px] items-center border border-[#c0c3c8] bg-white text-black">
      <span className="h-[18px] w-[11px] bg-[#006a00]" />
      <span className="flex-1 pr-[11px] text-center">7.35%</span>
    </div>
    <span className="ml-[10px]">9.85 GB(Free Physical Memory)</span>
    <span className="ml-[10px]">Total Properties 32 (20 Selected)</span>
    <span className="ml-auto h-[18px] border-l border-[#9a9ea6] pl-2">Connected: Default</span>
    <div className="flex items-center gap-[7px] pr-1 pl-[10px]">
      <RoundButton />
      <input
        type="range"
        aria-label="Zoom"
        defaultValue={50}
        className="h-4 w-[101px] appearance-none bg-transparent [&::-webkit-slider-runnable-track]:h-0.5 [&::-webkit-slider-runnable-track]:bg-linear-to-r [&::-webkit-slider-runnable-track]:from-[#5a8fc4] [&::-webkit-slider-runnable-track]:to-[#a9b3be] [&::-webkit-slider-thumb]:-mt-[6px] [&::-webkit-slider-thumb]:h-[14px] [&::-webkit-slider-thumb]:w-[9px] [&::-webkit-slider-thumb]:appearance-none [&::-webkit-slider-thumb]:rounded-t-xs [&::-webkit-slider-thumb]:rounded-b-full [&::-webkit-slider-thumb]:border [&::-webkit-slider-thumb]:border-[#d9b548] [&::-webkit-slider-thumb]:bg-[#fbe79a]"
      />
      <RoundButton plus />
    </div>
  </footer>
);

export default function App() {
  return (
    <div className="flex h-screen flex-col overflow-hidden bg-[#e9ecf0] font-['Noto_Sans',sans-serif] text-[11px]">
      <Header />
      <Ribbon />
      <div className="h-[6px] shrink-0 bg-linear-to-r from-[#e6e6ec] to-[#e0dcea] to-10%" />
      <main className="flex min-h-0 flex-1 pb-[3px]">
        <Navigator />
        <div className="flex min-w-0 flex-1 flex-col border-t border-l border-[#a0a4ab] bg-white">
          <div className="flex min-h-0 flex-1">
            <Settings />
            <div className="flex w-[11px] items-center">
              <svg viewBox="0 0 3 6" className="h-[6px] w-[3px]" aria-hidden>
                <path d="M3 0v6L0 3z" fill="#777" />
              </svg>
            </div>
            <Viewer />
          </div>
          <BottomTabs />
        </div>
      </main>
      <StatusBar />
    </div>
  );
}
